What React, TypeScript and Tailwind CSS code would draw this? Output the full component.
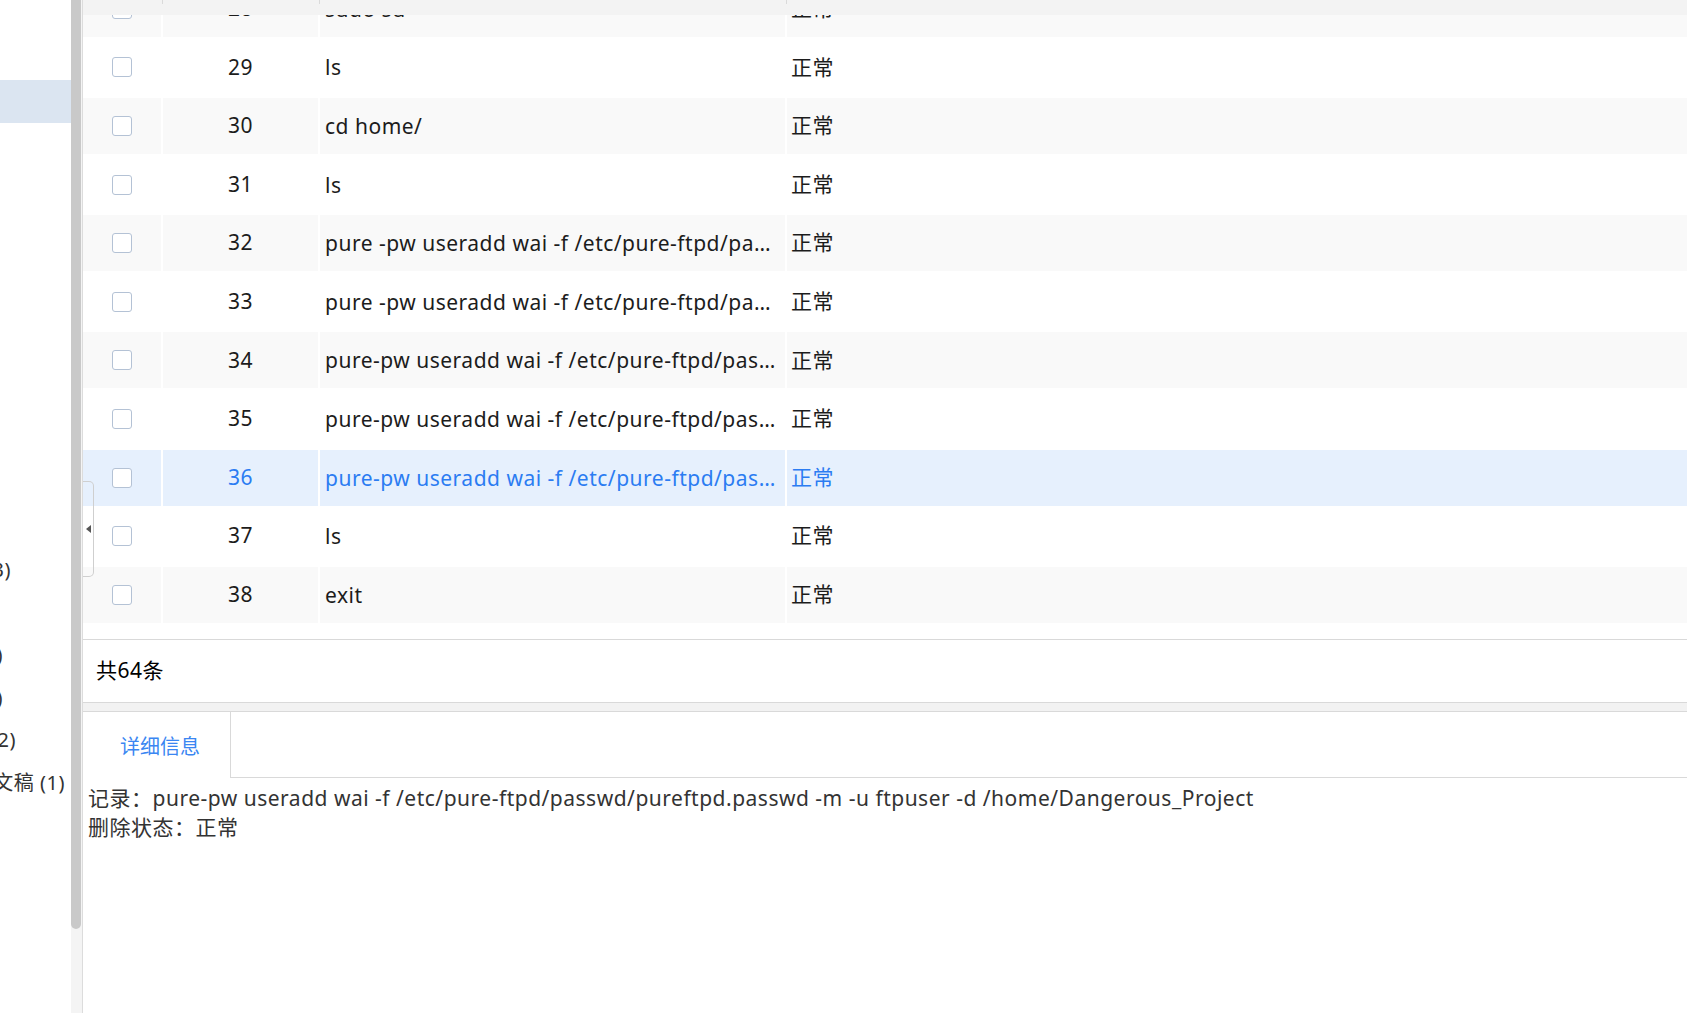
import React from "react";

interface LogRow {
  id: number;
  cmd: string;
  status: string;
}

const PW = "pure-pw useradd wai -f /etc/pure-ftpd/passwd/pureftpd.passwd -m -u ftpuser -d /home/Dangerous_Project";
const PW_SPACED = "pure -pw useradd wai -f /etc/pure-ftpd/passwd/pureftpd.passwd -m -u ftpuser -d /home/Dangerous_Project";

const rows: LogRow[] = [
  { id: 28, cmd: "sudo su", status: "正常" },
  { id: 29, cmd: "ls", status: "正常" },
  { id: 30, cmd: "cd home/", status: "正常" },
  { id: 31, cmd: "ls", status: "正常" },
  { id: 32, cmd: PW_SPACED, status: "正常" },
  { id: 33, cmd: PW_SPACED, status: "正常" },
  { id: 34, cmd: PW, status: "正常" },
  { id: 35, cmd: PW, status: "正常" },
  { id: 36, cmd: PW, status: "正常" },
  { id: 37, cmd: "ls", status: "正常" },
  { id: 38, cmd: "exit", status: "正常" },
  { id: 39, cmd: "ls", status: "正常" },
];

// sidebar tree items, scrolled sideways so only the tail of some labels shows
const treeItems: { label: string; end: string }[] = [
  { label: "", end: "" },
  { label: "", end: "" },
  { label: "", end: "" },
  { label: "", end: "" },
  { label: "", end: "" },
  { label: "", end: "" },
  { label: "", end: "" },
  { label: "", end: "" },
  { label: "", end: "" },
  { label: "", end: "" },
  { label: "", end: "" },
  { label: "", end: "" },
  { label: "", end: "" },
  { label: "回收站 (3)", end: "w-[11px]" },
  { label: "", end: "" },
  { label: "草稿 (0)", end: "w-[3px]" },
  { label: "共享 (0)", end: "w-[3px]" },
  { label: "收藏 (2)", end: "w-[16px]" },
  { label: "未命名文稿 (1)", end: "w-[65px]" },
  { label: "", end: "" },
  { label: "", end: "" },
  { label: "", end: "" },
  { label: "", end: "" },
];

function Sidebar() {
  return (
    <div className="w-[71px] h-full overflow-hidden shrink-0 bg-white">
      <div className="-mt-[5.2px] flex flex-col">
        {treeItems.map((item, i) => (
          <div
            key={i}
            className={`h-[42.6px] shrink-0 flex items-center text-[20px] text-[#333] ${i === 2 ? "bg-[#dbe5f1]" : ""}`}
          >
            {item.label && (
              <div className={`flex justify-end ${item.end}`}>
                <span className="whitespace-nowrap shrink-0">{item.label}</span>
              </div>
            )}
          </div>
        ))}
      </div>
    </div>
  );
}

function Checkbox() {
  return <div className="w-[20px] h-[20px] rounded-[3px] border-[1.5px] border-[#b4c2d5] bg-white" />;
}

function Row({ row }: { row: LogRow }) {
  const selected = row.id === 36;
  const bg = selected ? "bg-[#e6f0fd]" : row.id % 2 === 0 ? "bg-[#f9f9f9]" : "bg-white";
  const text = selected ? "text-[#2b7cf2]" : "text-[#1c1c1c]";
  return (
    <div className={`grid grid-cols-[78px_155px_465px_1fr] gap-x-[2px] h-[58.6px] ${text}`}>
      <div className={`h-[56px] flex items-center justify-center ${bg}`}>
        <Checkbox />
      </div>
      <div className={`h-[56px] flex items-center justify-center ${bg}`}>{row.id}</div>
      <div className={`h-[56px] leading-[56px] pl-[5px] pr-[4px] min-w-0 truncate ${bg}`}>{row.cmd}</div>
      <div className={`h-[56px] flex items-center pl-[4px] ${bg}`}>{row.status}</div>
    </div>
  );
}

function LogTable() {
  return (
    <div className="relative h-[639px] overflow-hidden">
      <div className="-mt-[19.2px]">
        {rows.map((r) => (
          <Row key={r.id} row={r} />
        ))}
      </div>
      {/* sticky header, its upper part is scrolled out of view */}
      <div className="absolute top-0 left-0 right-0 h-[15px] bg-[#f3f3f3]">
        <div className="absolute top-0 left-[79px] w-px h-[4px] bg-[#dadada]" />
        <div className="absolute top-0 left-[236px] w-px h-[4px] bg-[#dadada]" />
        <div className="absolute top-0 left-[703px] w-px h-[4px] bg-[#dadada]" />
      </div>
    </div>
  );
}

export default function App() {
  return (
    <div className="relative flex w-[1687px] h-[1013px] overflow-hidden bg-white text-[21px] tracking-[0.5px] font-['Noto_Sans','Noto_Sans_CJK_SC',sans-serif]">
      <Sidebar />
      <div className="w-[12px] h-full shrink-0 border-r border-[#dcdcdc] bg-[#f4f4f4]">
        <div className="w-[10px] h-[929px] bg-[#c9c9c9] rounded-b-[5px]" />
      </div>

      <div className="flex-1 min-w-0 flex flex-col">
        <LogTable />

        <div className="h-[64px] border-y border-[#d9d9d9] flex items-center pl-[13px] text-black">
          共64条
        </div>
        <div className="h-[8px] bg-[#f2f2f2]" />

        <div className="flex h-[67px] border-t border-[#d9d9d9]">
          <div className="w-[148px] border-r border-[#d9d9d9] flex items-center pl-[37px] pt-[3px] text-[20px] tracking-normal text-[#3a86f2]">
            详细信息
          </div>
          <div className="flex-1 border-b border-[#d9d9d9]" />
        </div>

        <div className="pl-[5px] pt-[6px] leading-[29px] text-[#333]">
          <div>记录：{PW}</div>
          <div>删除状态：正常</div>
        </div>
      </div>

      {/* splitter collapse handle */}
      <div className="absolute left-[83px] top-[481px] w-[11px] h-[96px] border border-l-0 border-[#cfcfcf] rounded-r-[5px] flex items-center justify-center">
        <div className="w-0 h-0 border-y-[4px] border-y-transparent border-r-[5px] border-r-[#555]" />
      </div>
    </div>
  );
}
